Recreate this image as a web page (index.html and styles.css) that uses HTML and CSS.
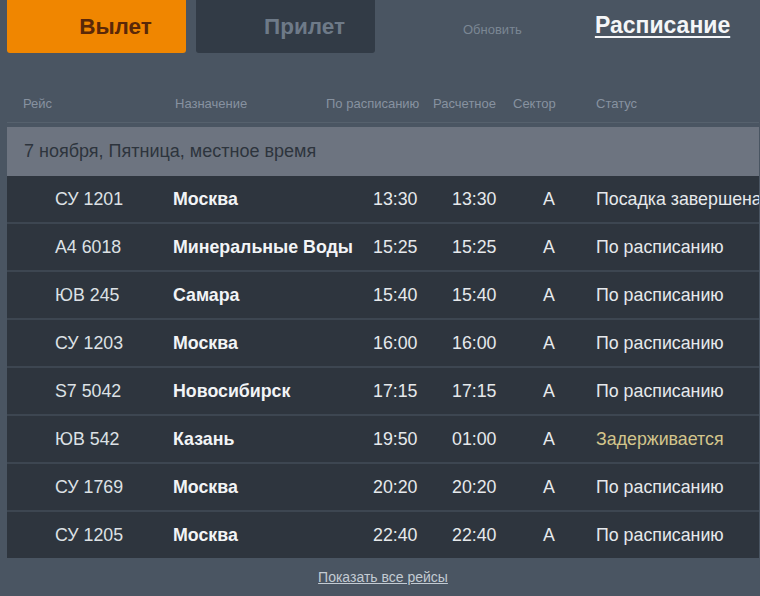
FILE: index.html
```html
<!DOCTYPE html>
<html lang="ru">
<head>
<meta charset="utf-8">
<title>Расписание</title>
<link rel="stylesheet" href="styles.css">
</head>
<body>
<div class="page">
  <div class="topbar">
    <div class="tab tab-dep">Вылет</div>
    <div class="tab tab-arr">Прилет</div>
    <a class="refresh">Обновить</a>
    <a class="schedule">Расписание</a>
  </div>

  <div class="board">
    <div class="thead">
      <span>Рейс</span>
      <span>Назначение</span>
      <span>По расписанию</span>
      <span>Расчетное</span>
      <span>Сектор</span>
      <span>Статус</span>
    </div>

    <div class="band">7 ноября, Пятница, местное время</div>

    <div class="rows">
      <div class="row"><span class="fl">СУ 1201</span><span class="dst">Москва</span><span>13:30</span><span>13:30</span><span>A</span><span>Посадка завершена</span></div>
      <div class="row"><span class="fl">А4 6018</span><span class="dst">Минеральные Воды</span><span>15:25</span><span>15:25</span><span>A</span><span>По расписанию</span></div>
      <div class="row"><span class="fl">ЮВ 245</span><span class="dst">Самара</span><span>15:40</span><span>15:40</span><span>A</span><span>По расписанию</span></div>
      <div class="row"><span class="fl">СУ 1203</span><span class="dst">Москва</span><span>16:00</span><span>16:00</span><span>A</span><span>По расписанию</span></div>
      <div class="row"><span class="fl">S7 5042</span><span class="dst">Новосибирск</span><span>17:15</span><span>17:15</span><span>A</span><span>По расписанию</span></div>
      <div class="row"><span class="fl">ЮВ 542</span><span class="dst">Казань</span><span>19:50</span><span>01:00</span><span>A</span><span class="delay">Задерживается</span></div>
      <div class="row"><span class="fl">СУ 1769</span><span class="dst">Москва</span><span>20:20</span><span>20:20</span><span>A</span><span>По расписанию</span></div>
      <div class="row"><span class="fl">СУ 1205</span><span class="dst">Москва</span><span>22:40</span><span>22:40</span><span>A</span><span>По расписанию</span></div>
    </div>

    <div class="footer"><a class="all">Показать все рейсы</a></div>
  </div>
</div>
</body>
</html>
```

FILE: styles.css
```css
html, body {
  margin: 0;
  padding: 0;
}
body {
  width: 760px;
  height: 596px;
  overflow: hidden;
  background: #4a5562;
  font-family: "Liberation Sans", Arial, sans-serif;
}
.page {
  padding-left: 7px;
}
.topbar {
  display: flex;
  align-items: center;
  height: 53px;
}
.tab {
  box-sizing: border-box;
  width: 179px;
  height: 53px;
  display: flex;
  align-items: center;
  justify-content: center;
  padding-left: 38px;
  font-weight: bold;
  font-size: 22.5px;
  border-radius: 0 0 3px 3px;
}
.tab-dep {
  background: #f08600;
  color: #5a2808;
}
.tab-arr {
  margin-left: 10px;
  background: #323b46;
  color: #6e7a88;
}
.refresh {
  margin-left: 88px;
  margin-top: 5px;
  font-size: 13px;
  color: #7b8794;
}
.schedule {
  margin-left: 73px;
  margin-top: -2px;
  font-size: 23px;
  font-weight: bold;
  color: #f4f6f8;
  text-decoration: underline;
  text-underline-offset: 3px;
}
.board {
  width: 752px;
  overflow: hidden;
}
.thead {
  display: grid;
  grid-template-columns: 152px 151px 107px 80px 83px 1fr;
  padding: 43px 0 10px 16px;
  line-height: 16px;
  font-size: 13px;
  color: #8792a0;
  border-bottom: 1px solid #56616d;
  white-space: nowrap;
}
.band {
  margin-top: 4px;
  height: 49px;
  box-sizing: border-box;
  padding-left: 17px;
  display: flex;
  align-items: center;
  background: #6d7480;
  color: #2d343d;
  font-size: 18px;
}
.row {
  display: grid;
  grid-template-columns: 118px 200px 79px 91px 53px 1fr;
  align-items: center;
  height: 46px;
  padding-left: 48px;
  background: #2e353e;
  color: #e6e9ec;
  font-size: 17.8px;
  white-space: nowrap;
}
.row + .row {
  border-top: 2px solid #3d4651;
}
.fl {
  color: #dde1e5;
}
.dst {
  font-weight: bold;
  color: #f2f4f6;
}
.delay {
  color: #d3c58c;
}
.footer {
  padding-top: 11px;
  text-align: center;
  line-height: 16px;
}
.all {
  font-size: 14px;
  color: #c3cbd3;
  text-decoration: underline;
}
```
